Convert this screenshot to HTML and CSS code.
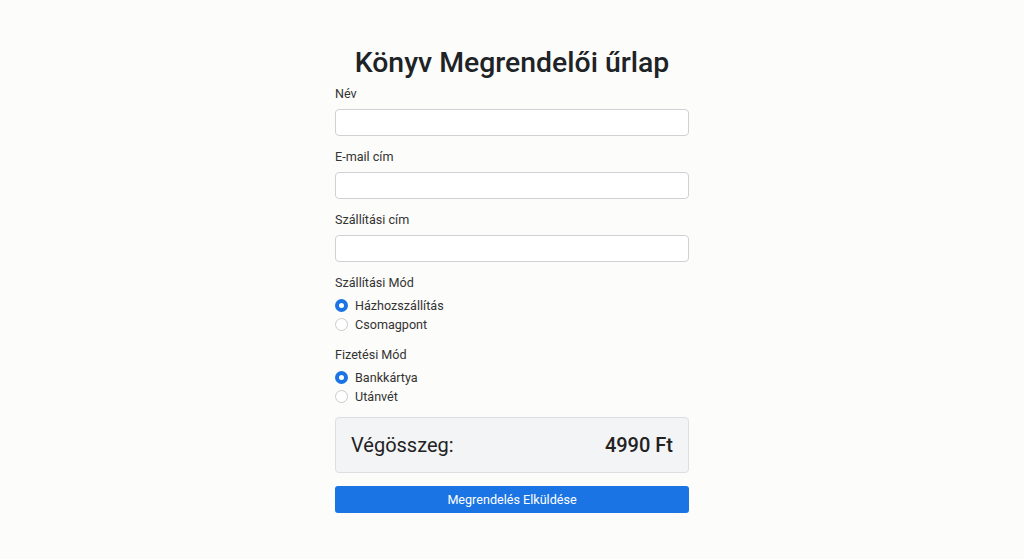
FILE: index.html
```html
<!DOCTYPE html>
<html lang="hu">
<head>
  <meta charset="UTF-8">
  <title>Könyv Megrendelői űrlap</title>
  <link rel="stylesheet" href="styles.css">
</head>
<body>
  <form class="order-form">
    <h1 class="title">Könyv Megrendelői űrlap</h1>

    <div class="field">
      <label for="name">Név</label>
      <input type="text" id="name">
    </div>
    <div class="field">
      <label for="email">E-mail cím</label>
      <input type="email" id="email">
    </div>
    <div class="field">
      <label for="address">Szállítási cím</label>
      <input type="text" id="address">
    </div>

    <div class="field">
      <label>Szállítási Mód</label>
      <div class="options">
        <label class="option"><input type="radio" name="shipping" checked> Házhozszállítás</label>
        <label class="option"><input type="radio" name="shipping"> Csomagpont</label>
      </div>
    </div>

    <div class="field">
      <label>Fizetési Mód</label>
      <div class="options">
        <label class="option"><input type="radio" name="payment" checked> Bankkártya</label>
        <label class="option"><input type="radio" name="payment"> Utánvét</label>
      </div>
    </div>

    <div class="total">
      <span>Végösszeg:</span>
      <span class="amount">4990 Ft</span>
    </div>

    <button type="button" class="submit">Megrendelés Elküldése</button>
  </form>
</body>
</html>
```

FILE: styles.css
```css
body {
  margin: 0;
  padding-top: 46px;
  background-color: #fcfcfa;
  font-family: Roboto, "Liberation Sans", Arial, sans-serif;
  color: #2b2b2b;
}
.order-form {
  width: 354px;
  margin: 0 auto;
}
.title {
  margin: 0 -40px 6px;
  font-size: 28.4px;
  line-height: 34px;
  font-weight: 500;
  text-align: center;
  color: #202326;
}
.field {
  margin-bottom: 13px;
}
.field > label {
  display: block;
  font-size: 12.6px;
  line-height: 16px;
  margin-bottom: 7px;
  color: #333;
}
.field input[type="text"],
.field input[type="email"] {
  display: block;
  box-sizing: border-box;
  width: 100%;
  height: 27px;
  margin: 0;
  border: 1px solid #cfd2d4;
  border-radius: 4px;
  background: #fff;
}
.options {
  margin-top: -2px;
}
.option {
  display: flex;
  align-items: center;
  gap: 7px;
  height: 19px;
  font-size: 12.6px;
  color: #333;
}
.option input {
  appearance: none;
  box-sizing: border-box;
  width: 13px;
  height: 13px;
  margin: 0;
  border: 1px solid #c9ccce;
  border-radius: 50%;
  background: #fff;
}
.option input:checked {
  border: 4px solid #1b74e4;
}
.total {
  display: flex;
  justify-content: space-between;
  align-items: center;
  box-sizing: border-box;
  height: 56px;
  margin-top: -2px;
  padding: 0 15px;
  background-color: #f3f4f5;
  border: 1px solid #dcdfe1;
  border-radius: 4px;
  font-size: 20px;
  color: #222;
}
.amount {
  font-weight: 500;
}
.submit {
  display: block;
  width: 100%;
  height: 27px;
  margin-top: 13px;
  border: none;
  border-radius: 3px;
  background-color: #1b74e4;
  color: #fff;
  font-family: inherit;
  font-size: 12.6px;
}
```
